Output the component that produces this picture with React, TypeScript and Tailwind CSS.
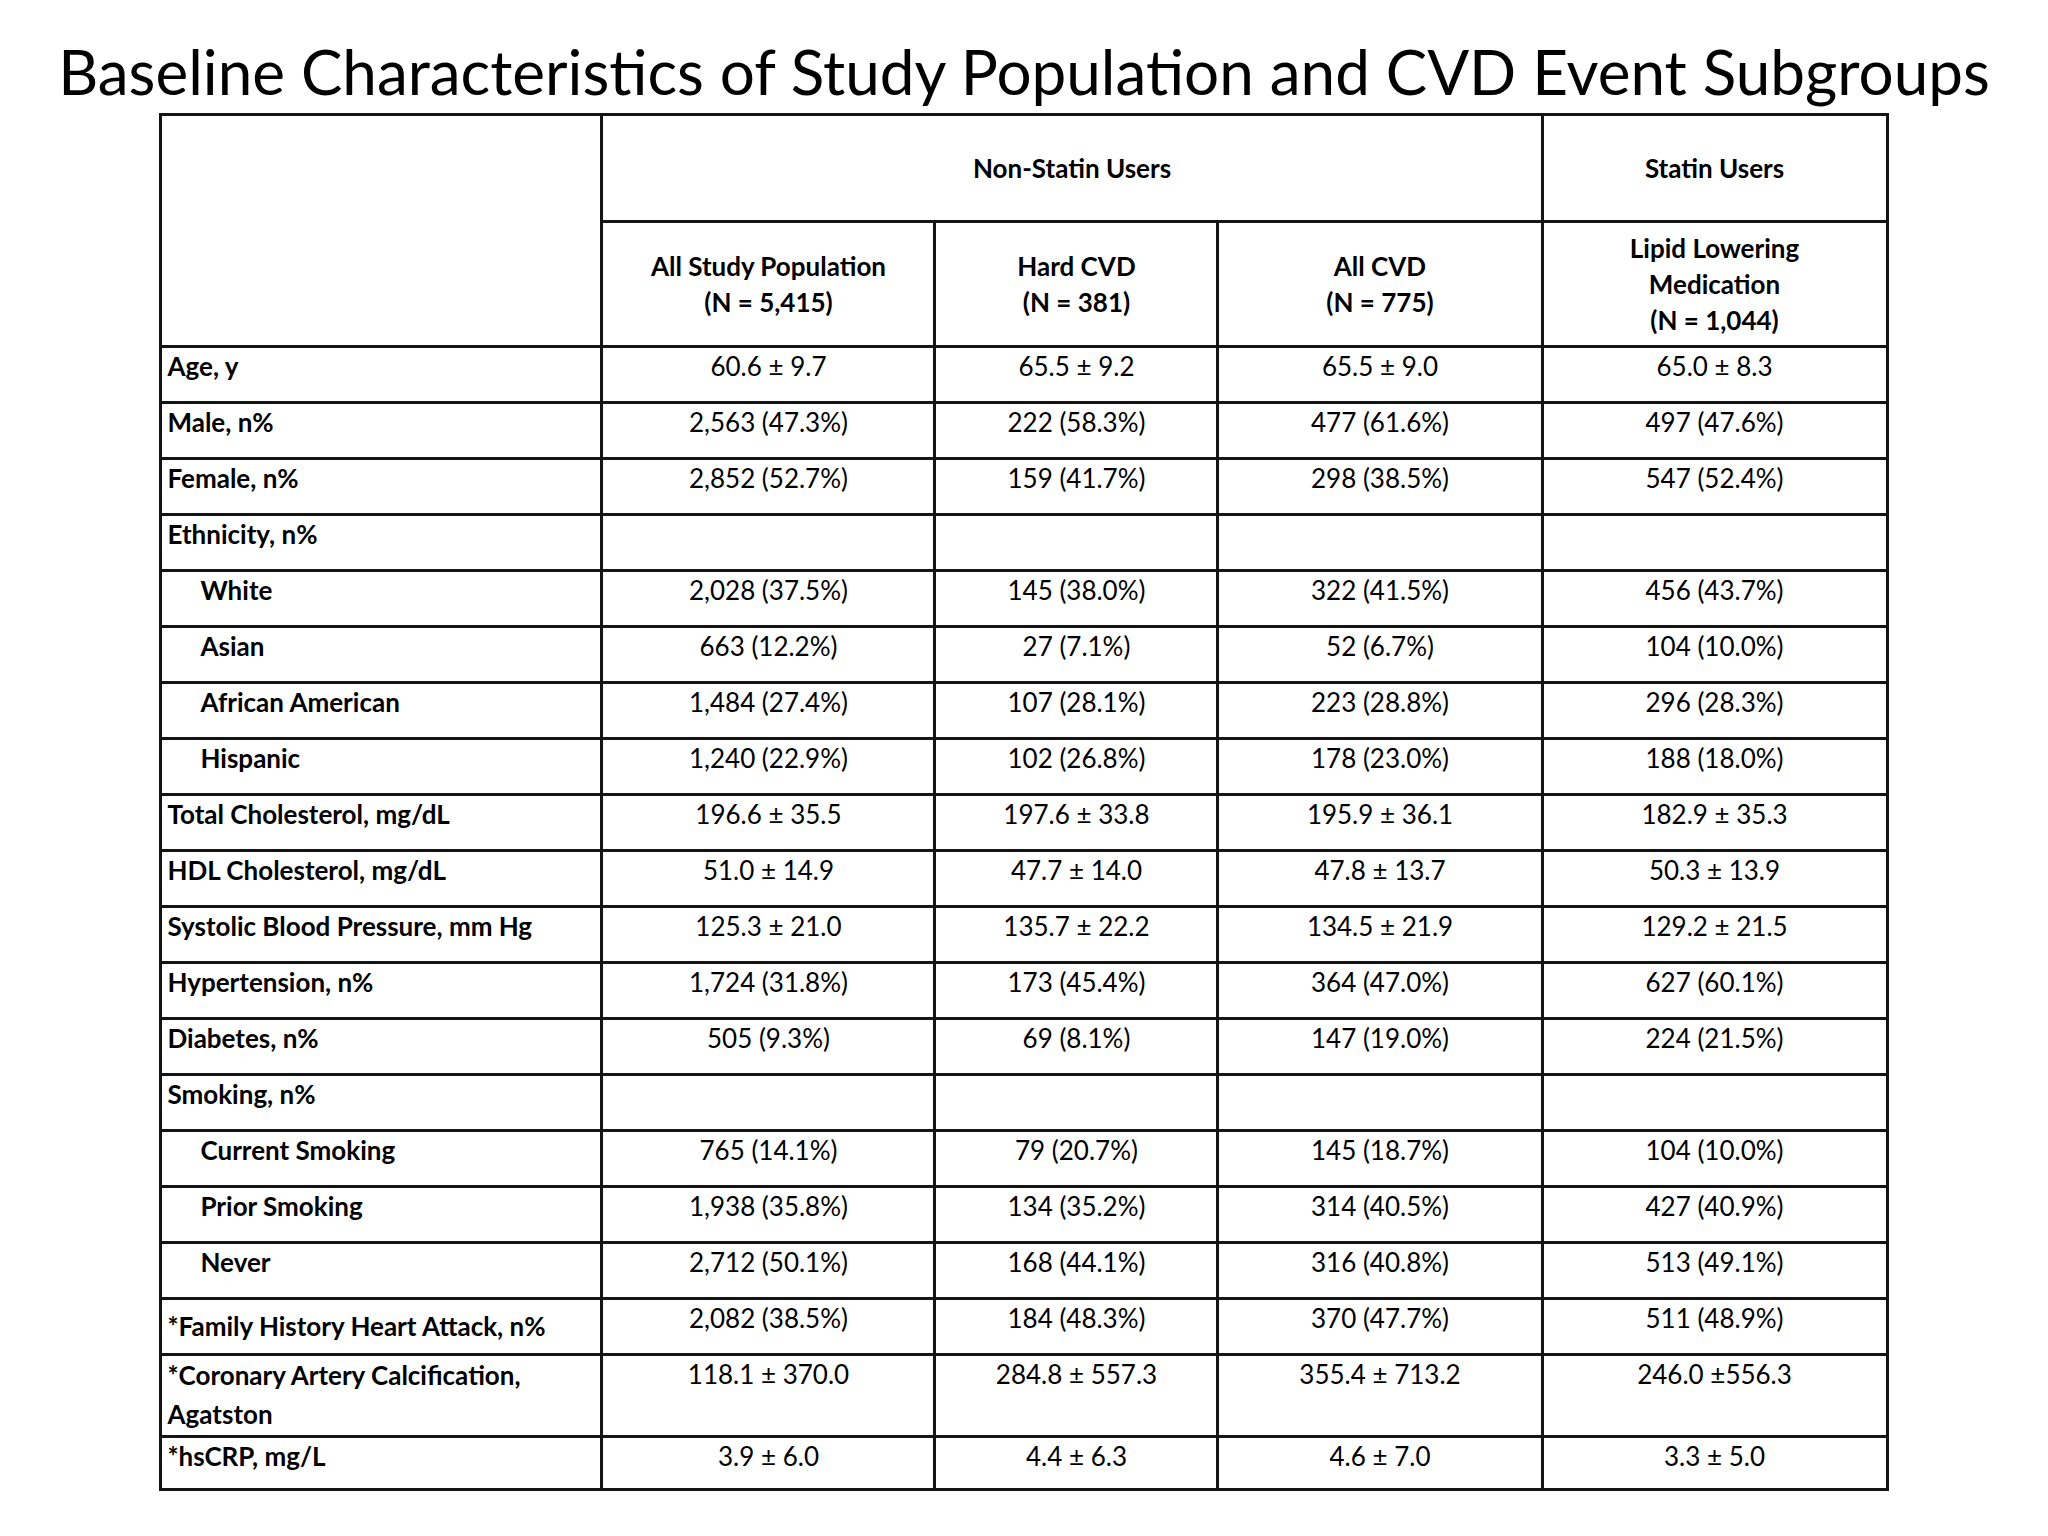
import React from "react";

type Row = {
  label: string;
  values: string[];
  indent?: boolean;
  height?: string;
  labelClass?: string;
};

const rows: Row[] = [
  { label: "Age, y", values: ["60.6 ± 9.7", "65.5 ± 9.2", "65.5 ± 9.0", "65.0 ± 8.3"] },
  { label: "Male, n%", values: ["2,563 (47.3%)", "222 (58.3%)", "477 (61.6%)", "497 (47.6%)"] },
  { label: "Female, n%", values: ["2,852 (52.7%)", "159 (41.7%)", "298 (38.5%)", "547 (52.4%)"] },
  { label: "Ethnicity, n%", values: ["", "", "", ""] },
  { label: "White", indent: true, values: ["2,028 (37.5%)", "145 (38.0%)", "322 (41.5%)", "456 (43.7%)"] },
  { label: "Asian", indent: true, values: ["663 (12.2%)", "27 (7.1%)", "52 (6.7%)", "104 (10.0%)"] },
  { label: "African American", indent: true, values: ["1,484 (27.4%)", "107 (28.1%)", "223 (28.8%)", "296 (28.3%)"] },
  { label: "Hispanic", indent: true, values: ["1,240 (22.9%)", "102 (26.8%)", "178 (23.0%)", "188 (18.0%)"] },
  { label: "Total Cholesterol, mg/dL", values: ["196.6 ± 35.5", "197.6 ± 33.8", "195.9 ± 36.1", "182.9 ± 35.3"] },
  { label: "HDL Cholesterol, mg/dL", values: ["51.0 ± 14.9", "47.7 ± 14.0", "47.8 ± 13.7", "50.3 ± 13.9"] },
  { label: "Systolic Blood Pressure, mm Hg", values: ["125.3 ± 21.0", "135.7 ± 22.2", "134.5 ± 21.9", "129.2 ± 21.5"] },
  { label: "Hypertension, n%", values: ["1,724 (31.8%)", "173 (45.4%)", "364 (47.0%)", "627 (60.1%)"] },
  { label: "Diabetes, n%", values: ["505 (9.3%)", "69 (8.1%)", "147 (19.0%)", "224 (21.5%)"] },
  { label: "Smoking, n%", values: ["", "", "", ""] },
  { label: "Current Smoking", indent: true, values: ["765 (14.1%)", "79 (20.7%)", "145 (18.7%)", "104 (10.0%)"] },
  { label: "Prior Smoking", indent: true, values: ["1,938 (35.8%)", "134 (35.2%)", "314 (40.5%)", "427 (40.9%)"] },
  { label: "Never", indent: true, values: ["2,712 (50.1%)", "168 (44.1%)", "316 (40.8%)", "513 (49.1%)"] },
  {
    label: "*Family History Heart Attack, n%",
    labelClass: "pt-[8px]",
    values: ["2,082 (38.5%)", "184 (48.3%)", "370 (47.7%)", "511 (48.9%)"],
  },
  {
    label: "*Coronary Artery Calcification, Agatston",
    height: "h-[82px]",
    labelClass: "leading-[39px]",
    values: ["118.1 ± 370.0", "284.8 ± 557.3", "355.4 ± 713.2", "246.0 ±556.3"],
  },
  { label: "*hsCRP, mg/L", height: "h-[53px]", values: ["3.9 ± 6.0", "4.4 ± 6.3", "4.6 ± 7.0", "3.3 ± 5.0"] },
];

const cell = "border-[3px] border-[#141414] align-top";
const head = "border-[3px] border-[#141414] align-middle text-center font-bold leading-[36px]";

export default function App() {
  return (
    <div className="min-h-screen w-[2048px] bg-white text-black font-['Lato','Liberation_Sans',sans-serif]">
      <h1 className="pt-[40px] text-center text-[62px] leading-[63px] font-normal">
        Baseline Characteristics of Study Population and CVD Event Subgroups
      </h1>

      <div className="mt-[10px] flex justify-center">
        <table className="w-[1726px] table-fixed border-collapse text-[26px]">
          <colgroup>
            <col className="w-[441px]" />
            <col className="w-[333px]" />
            <col className="w-[283px]" />
            <col className="w-[324px]" />
            <col className="w-[345px]" />
          </colgroup>
          <thead>
            <tr className="h-[107px]">
              <th rowSpan={2} className={cell} />
              <th colSpan={3} className={head}>
                Non-Statin Users
              </th>
              <th className={head}>Statin Users</th>
            </tr>
            <tr className="h-[125px]">
              <th className={head}>
                All Study Population
                <br />
                (N = 5,415)
              </th>
              <th className={head}>
                Hard CVD
                <br />
                (N = 381)
              </th>
              <th className={head}>
                All CVD
                <br />
                (N = 775)
              </th>
              <th className={head}>
                Lipid Lowering
                <br />
                Medication
                <br />
                (N = 1,044)
              </th>
            </tr>
          </thead>
          <tbody>
            {rows.map((r) => (
              <tr key={r.label} className={r.height ?? "h-[56px]"}>
                <td
                  className={`${cell} font-bold leading-[36px] ${r.indent ? "pl-[38px]" : "pl-[5px]"} ${
                    r.labelClass ?? ""
                  }`}
                >
                  {r.label}
                </td>
                {r.values.map((v, i) => (
                  <td key={i} className={`${cell} text-center leading-[36px]`}>
                    {v}
                  </td>
                ))}
              </tr>
            ))}
          </tbody>
        </table>
      </div>
    </div>
  );
}
